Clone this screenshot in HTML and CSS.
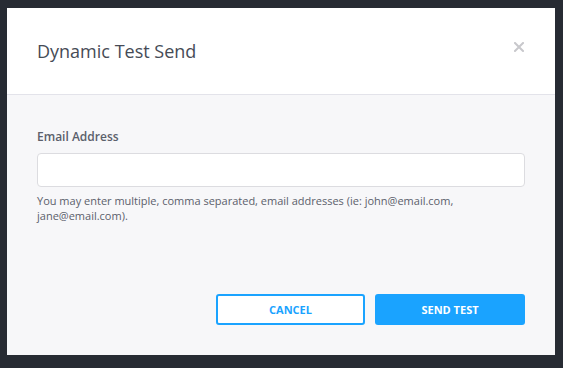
FILE: index.html
```html
<!DOCTYPE html>
<html lang="en">
<head>
    <meta charset="UTF-8">
    <title>Dynamic Test Send</title>
    <link rel="stylesheet" href="styles.css">
</head>
<body>
    <div class="modal">
        <div class="modal-header">
            <h2 class="modal-title">Dynamic Test Send</h2>
            <button class="close-button" aria-label="Close">
                <svg width="10" height="10" viewBox="0 0 10 10"><path d="M1 1 L9 9 M9 1 L1 9" stroke="#c8c8cc" stroke-width="2" stroke-linecap="square"/></svg>
            </button>
        </div>
        <div class="modal-body">
            <label class="field-label" for="email">Email Address</label>
            <input type="text" class="field-input" id="email">
            <p class="help-text">You may enter multiple, comma separated, email addresses (ie: john@email.com, jane@email.com).</p>
            <div class="modal-actions">
                <button class="btn btn-outline">Cancel</button>
                <button class="btn btn-primary">Send Test</button>
            </div>
        </div>
    </div>
</body>
</html>
```

FILE: styles.css
```css
body {
    margin: 0;
    background-color: #272b33;
    font-family: 'Open Sans', sans-serif;
    height: 368px;
    overflow: hidden;
}

.modal {
    margin: 8px 0 0 7px;
    width: 548px;
    height: 347px;
    display: flex;
    flex-direction: column;
}

.modal-header {
    background-color: #fff;
    height: 86px;
    border-bottom: 1px solid #e3e3ea;
    display: flex;
    align-items: center;
    justify-content: space-between;
    padding: 0 31px 0 30px;
}
.modal-title {
    margin: 0;
    font-size: 18px;
    font-weight: 400;
    color: #464b56;
}
.close-button {
    align-self: flex-start;
    margin-top: 34px;
    border: none;
    background: none;
    padding: 0;
    width: 10px;
    height: 10px;
    display: flex;
    cursor: pointer;
}

.modal-body {
    flex: 1;
    background-color: #f7f7f9;
    padding: 34px 30px 0 30px;
    display: flex;
    flex-direction: column;
}
.field-label {
    font-size: 12px;
    font-weight: 600;
    color: #5b606b;
    line-height: 16px;
}
.field-input {
    margin-top: 8px;
    height: 34px;
    box-sizing: border-box;
    width: 488px;
    border: 1px solid #dcdce0;
    border-radius: 4px;
    background-color: #fff;
}
.help-text {
    margin: 6px 0 0 0;
    font-size: 11px;
    line-height: 15px;
    color: #5b606b;
}

.modal-actions {
    display: flex;
    justify-content: flex-end;
    gap: 10px;
    margin-top: 71px;
}
.btn {
    width: 150px;
    height: 31px;
    box-sizing: border-box;
    border-radius: 3px;
    font-family: 'Open Sans', sans-serif;
    font-size: 11px;
    font-weight: 700;
    text-transform: uppercase;
    cursor: pointer;
}
.btn-outline {
    width: 149px;
    background-color: #fff;
    border: 2px solid #1aa3ff;
    color: #1aa3ff;
}
.btn-primary {
    background-color: #1aa3ff;
    border: none;
    color: #fff;
}
```
